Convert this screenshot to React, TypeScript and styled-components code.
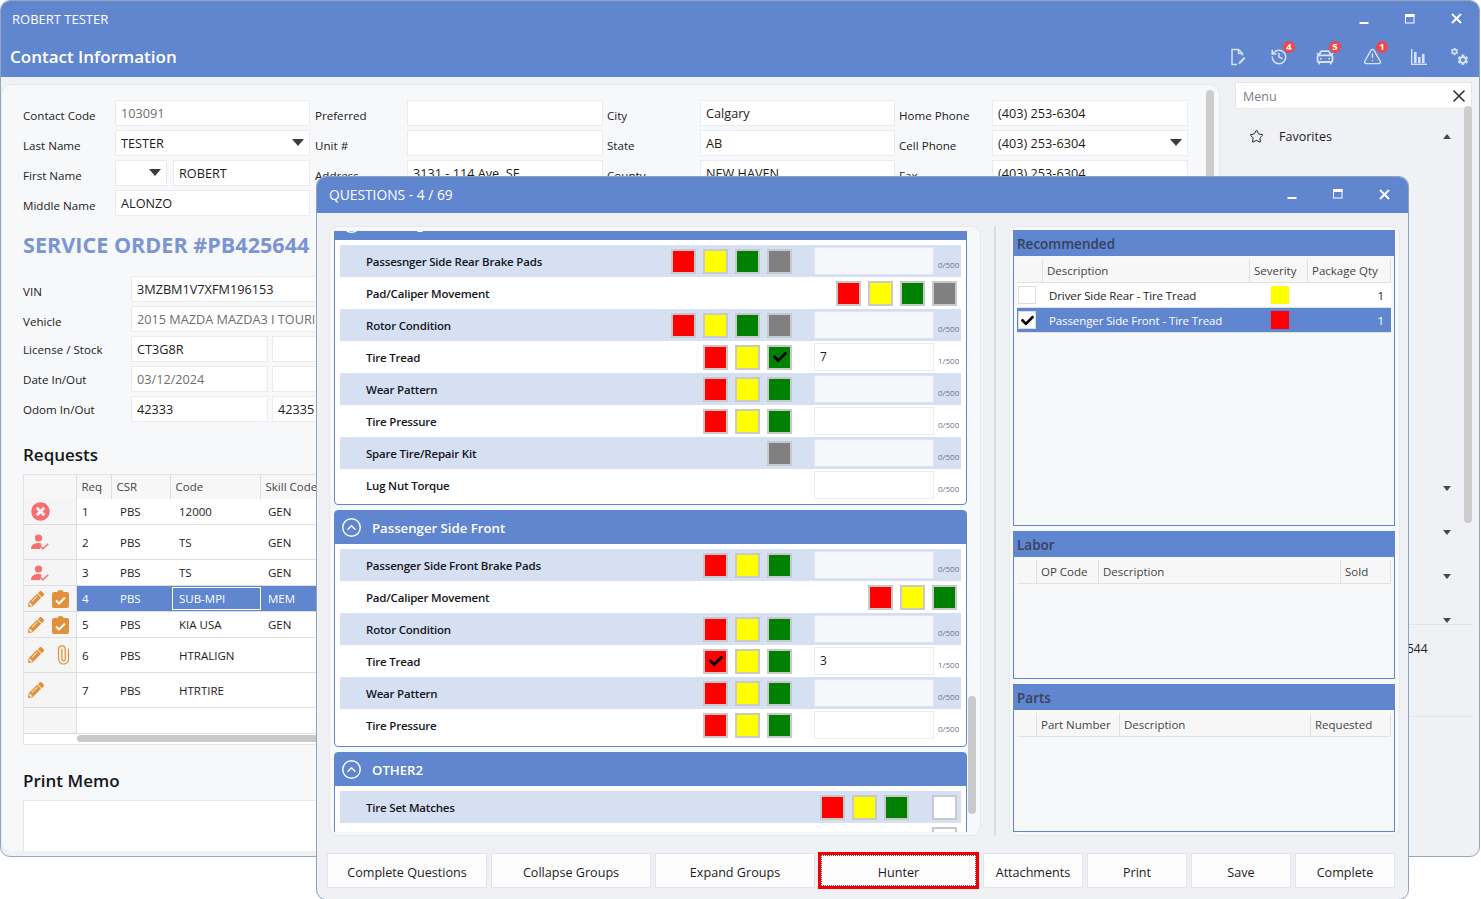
import { ReactNode } from 'react';
import styled, { createGlobalStyle } from 'styled-components';
import { CarFront, ChevronRight, CircleChevronUp, History, Paperclip, Star, TriangleAlert, X } from 'lucide-react';
import { FaCheck, FaPencilAlt, FaTimesCircle } from 'react-icons/fa';

const BLUE = '#5f86cf';
const GEAR = 'M19.14 12.94c.04-.3.06-.61.06-.94 0-.32-.02-.64-.07-.94l2.03-1.58c.18-.14.23-.41.12-.61l-1.92-3.32c-.12-.22-.37-.29-.59-.22l-2.39.96c-.5-.38-1.03-.7-1.62-.94l-.36-2.54c-.04-.24-.24-.41-.48-.41h-3.84c-.24 0-.43.17-.47.41l-.36 2.54c-.59.24-1.13.57-1.62.94l-2.39-.96c-.22-.08-.47 0-.59.22L2.74 8.87c-.12.21-.08.47.12.61l2.03 1.58c-.05.3-.09.63-.09.94s.02.64.07.94l-2.03 1.58c-.18.14-.23.41-.12.61l1.92 3.32c.12.22.37.29.59.22l2.39-.96c.5.38 1.03.7 1.62.94l.36 2.54c.05.24.24.41.48.41h3.84c.24 0 .44-.17.47-.41l.36-2.54c.59-.24 1.13-.56 1.62-.94l2.39.96c.22.08.47 0 .59-.22l1.92-3.32c.12-.22.07-.47-.12-.61l-2.01-1.58zM12 15.6c-1.98 0-3.6-1.62-3.6-3.6s1.62-3.6 3.6-3.6 3.6 1.62 3.6 3.6-1.62 3.6-3.6 3.6z';

const GlobalStyle = createGlobalStyle`
  html, body {
    margin: 0;
    background: #fff;
    overflow: hidden;
  }
  * {
    box-sizing: border-box;
  }
`;

type Swatch = 'red' | 'yellow' | 'green' | 'gray' | 'white';

interface Question {
  label: string;
  buttons: Swatch[];
  checked?: Swatch;
  value?: string;
  noInput?: boolean;
}

const rearQuestions: Question[] = [
  { label: 'Passesnger Side Rear Brake Pads', buttons: ['red', 'yellow', 'green', 'gray'] },
  { label: 'Pad/Caliper Movement', buttons: ['red', 'yellow', 'green', 'gray'], noInput: true },
  { label: 'Rotor Condition', buttons: ['red', 'yellow', 'green', 'gray'] },
  { label: 'Tire Tread', buttons: ['red', 'yellow', 'green'], checked: 'green', value: '7' },
  { label: 'Wear Pattern', buttons: ['red', 'yellow', 'green'] },
  { label: 'Tire Pressure', buttons: ['red', 'yellow', 'green'] },
  { label: 'Spare Tire/Repair Kit', buttons: ['gray'] },
  { label: 'Lug Nut Torque', buttons: [] },
];

const frontQuestions: Question[] = [
  { label: 'Passenger Side Front Brake Pads', buttons: ['red', 'yellow', 'green'] },
  { label: 'Pad/Caliper Movement', buttons: ['red', 'yellow', 'green'], noInput: true },
  { label: 'Rotor Condition', buttons: ['red', 'yellow', 'green'] },
  { label: 'Tire Tread', buttons: ['red', 'yellow', 'green'], checked: 'red', value: '3' },
  { label: 'Wear Pattern', buttons: ['red', 'yellow', 'green'] },
  { label: 'Tire Pressure', buttons: ['red', 'yellow', 'green'] },
];

const otherQuestions: Question[] = [
  { label: 'Tire Set Matches', buttons: ['red', 'yellow', 'green', 'white'], noInput: true },
  { label: '', buttons: ['white'], noInput: true },
];

const requests = [
  { req: '1', code: '12000', skill: 'GEN', height: 26, icons: 'cancel' },
  { req: '2', code: 'TS', skill: 'GEN', height: 35, icons: 'user' },
  { req: '3', code: 'TS', skill: 'GEN', height: 26, icons: 'user' },
  { req: '4', code: 'SUB-MPI', skill: 'MEM', height: 26, icons: 'clipboard', selected: true },
  { req: '5', code: 'KIA USA', skill: 'GEN', height: 26, icons: 'clipboard' },
  { req: '6', code: 'HTRALIGN', skill: '', height: 35, icons: 'clip' },
  { req: '7', code: 'HTRTIRE', skill: '', height: 35, icons: 'pencil' },
];

const Page = styled.div`
  position: relative;
  width: 1481px;
  height: 899px;
  overflow: hidden;
  background: #fff;
  font-family: 'Open Sans', 'Noto Sans', sans-serif;
  font-size: 12px;
  color: #1c1c1c;
`;

const MainWindow = styled.div`
  width: 1480px;
  height: 857px;
  display: flex;
  flex-direction: column;
  background: #eff1f5;
  border: 1px solid #94a6ba;
  border-radius: 10px;
  overflow: hidden;
`;

const TitleBar = styled.div`
  height: 37px;
  flex: none;
  display: flex;
  align-items: center;
  background: ${BLUE};
  color: #fff;
  padding: 0 0 2px 11px;
  font-size: 13px;
`;

const TitleText = styled.div`
  flex: 1;
`;

const WindowButton = styled.div<{ $width: number }>`
  width: ${(p) => p.$width}px;
  height: 24px;
  display: flex;
  align-items: center;
  justify-content: center;
`;

const Header = styled.div`
  height: 39px;
  flex: none;
  display: flex;
  align-items: center;
  background: ${BLUE};
  color: #fff;
  padding: 0 12px 2px 9px;
`;

const HeaderTitle = styled.div`
  flex: 1;
  font-size: 17px;
  font-weight: 600;
`;

const HeaderIcon = styled.div<{ $gap: number }>`
  position: relative;
  width: 16px;
  height: 18px;
  margin-left: ${(p) => p.$gap}px;
  color: #d7e2f5;
  display: flex;
  align-items: center;
  justify-content: center;
  flex: none;
  svg {
    flex: none;
  }
`;

const Badge = styled.span`
  position: absolute;
  top: -7px;
  right: -8px;
  width: 12px;
  height: 12px;
  border-radius: 50%;
  background: #f0474b;
  color: #fff;
  font-size: 9.5px;
  font-weight: 700;
  line-height: 12px;
  text-align: center;
`;

const Body = styled.div`
  flex: 1;
  min-height: 0;
  display: flex;
`;

const LeftPanel = styled.div`
  position: relative;
  width: 1219px;
  height: 767px;
  margin-top: 7px;
  padding: 15px 0 0 21px;
  background: #f7f8fa;
  border: 1px solid #e6e8ed;
  border-bottom: none;
  border-radius: 10px;
  overflow: hidden;
`;

const PanelScroll = styled.div`
  position: absolute;
  top: 5px;
  right: 5px;
  width: 8px;
  height: 500px;
  border-radius: 4px;
  background: #cdcdcd;
`;

const ContactGrid = styled.div`
  display: grid;
  grid-template-columns: 92px 195px 97px 196px 97px 195px 97px 196px;
  grid-auto-rows: 26px;
  row-gap: 4px;
`;

const Label = styled.div<{ $inset?: number; $drop?: number }>`
  padding: ${(p) => p.$drop ?? 5}px 0 0 ${(p) => p.$inset ?? 0}px;
  font-size: 11.6px;
  line-height: 21px;
  color: #222;
  white-space: nowrap;
`;

const Field = styled.div<{ $muted?: boolean; $width?: number }>`
  position: relative;
  height: 26px;
  padding: 0 5px;
  background: #fff;
  border: 1px solid #e9ebef;
  color: ${(p) => (p.$muted ? '#6e6e6e' : '#1c1c1c')};
  font-size: 12.7px;
  line-height: 25px;
  white-space: nowrap;
  overflow: hidden;
  ${(p) => (p.$width ? `width: ${p.$width}px; flex: none;` : '')}
`;

const NameField = styled(Field)`
  flex: 1;
`;

const Caret = styled.span`
  position: absolute;
  top: 8px;
  right: 5px;
  width: 0;
  height: 0;
  border-left: 6.5px solid transparent;
  border-right: 6.5px solid transparent;
  border-top: 7px solid #3c3c3c;
`;

const SplitField = styled.div`
  display: flex;
  gap: 6px;
`;

const ServiceTitle = styled.div`
  margin-top: 14px;
  height: 30px;
  font-size: 21.6px;
  line-height: 30px;
  font-weight: 700;
  color: #7b95d1;
  white-space: nowrap;
`;

const VehicleGrid = styled.div`
  margin-top: 16px;
  display: grid;
  grid-template-columns: 104px 137px 300px;
  grid-auto-rows: 26px;
  row-gap: 4px;
  column-gap: 4px;
`;

const WideField = styled(Field)`
  grid-column: span 2;
`;

const SectionTitle = styled.div<{ $top: number }>`
  margin-top: ${(p) => p.$top}px;
  height: 24px;
  font-size: 17px;
  line-height: 24px;
  font-weight: 600;
  color: #14161c;
`;

const RequestTable = styled.div`
  margin-top: 7px;
  width: 700px;
  border: 1px solid #e3e3e3;
  background: #fff;
  font-size: 11.5px;
`;

const RequestRow = styled.div<{ $height: number; $selected?: boolean }>`
  display: grid;
  grid-template-columns: 53px 35px 59px 90px 1fr;
  height: ${(p) => p.$height}px;
  background: ${(p) => (p.$selected ? BLUE : '#fff')};
  color: ${(p) => (p.$selected ? '#fff' : '#1c1c1c')};
  border-bottom: 1px solid #dedede;
`;

const HeadCell = styled.div`
  padding-left: 4.5px;
  background: #f7f7f7;
  border-right: 1px solid #dedede;
  color: #444;
  line-height: 24px;
`;

const IconCell = styled.div`
  display: flex;
  align-items: center;
  gap: 8px;
  padding-left: 4px;
  background: #f5f5f5;
  border-right: 1px solid #dedede;
  color: #e0913a;
`;

const IconNudge = styled.span`
  display: flex;
  margin-left: 3px;
`;

const UprightClip = styled(Paperclip)`
  margin-left: 1px;
  transform: rotate(-45deg);
`;

const Cell = styled.div<{ $focus?: boolean; $pad: number }>`
  padding-left: ${(p) => p.$pad}px;
  align-self: stretch;
  display: flex;
  align-items: center;
  ${(p) => (p.$focus ? 'border: 1px solid #fff; margin: 1px 0 1px 1px; padding-left: 6px;' : '')}
`;

const TableScroll = styled.div`
  height: 10px;
  padding: 1px 0 1px 53px;
  background: #fff;
`;

const TableThumb = styled.div`
  width: 400px;
  height: 7px;
  border-radius: 4px 0 0 4px;
  background: #c9c9c9;
`;

const MemoBox = styled.div`
  margin-top: 7px;
  width: 700px;
  height: 60px;
  background: #fff;
  border: 1px solid #e6e6e6;
`;

const Sidebar = styled.div`
  position: relative;
  flex: 1;
  padding: 5px 7px 0 15px;
  display: flex;
  flex-direction: column;
`;

const MenuSearch = styled.div`
  height: 27px;
  display: flex;
  align-items: center;
  justify-content: space-between;
  padding: 1px 2px 0 7px;
  background: #fff;
  border: 1px solid #e4e6eb;
  color: #7d7d7d;
  font-size: 12.5px;
`;

const MenuList = styled.div`
  position: relative;
  height: 510px;
  margin-top: 5px;
  overflow: hidden;
`;

const MenuRow = styled.div`
  height: 44px;
  display: flex;
  align-items: center;
  padding-left: 14px;
  font-size: 12.5px;
  color: #222;
`;

const MenuIcon = styled.div<{ $pad?: number }>`
  width: 30px;
  padding-left: ${(p) => p.$pad ?? 0}px;
  display: flex;
  align-items: center;
`;

const MenuText = styled.div`
  flex: 1;
`;

const SmallCaret = styled.span<{ $up?: boolean }>`
  margin-right: 21px;
  width: 0;
  height: 0;
  border-left: 4.5px solid transparent;
  border-right: 4.5px solid transparent;
  ${(p) => (p.$up ? 'border-bottom' : 'border-top')}: 5px solid #4a4a4a;
`;

const MenuScroll = styled.div`
  position: absolute;
  top: 29px;
  right: 7px;
  width: 8px;
  height: 417px;
  border-radius: 4px;
  background: #cdcdcd;
`;

const SideInfo = styled.div`
  height: 93px;
  margin-right: -1px;
  border-top: 1px solid #e2e4e9;
  border-bottom: 1px solid #e2e4e9;
  padding: 15px 0 0 172px;
  font-size: 12px;
  color: #222;
`;

const Modal = styled.div`
  position: absolute;
  left: 316px;
  top: 176px;
  width: 1093px;
  height: 724px;
  display: flex;
  flex-direction: column;
  background: #eff1f5;
  border: 1px solid #8fa3bb;
  border-radius: 10px;
  overflow: hidden;
`;

const ModalHeader = styled.div`
  height: 36px;
  flex: none;
  display: flex;
  align-items: center;
  padding: 0 0 2px 12px;
  background: ${BLUE};
  color: #fff;
  font-size: 13.8px;
`;

const ModalContent = styled.div`
  height: 610px;
  margin-top: 13px;
  padding-left: 12px;
  display: flex;
  flex: none;
`;

const QuestionCard = styled.div`
  position: relative;
  width: 652px;
  padding: 4px 0 3px 4px;
  background: #f7f8fa;
  border: 1px solid #e6e8ed;
  border-radius: 10px;
`;

const QuestionScroll = styled.div`
  width: 633px;
  height: 100%;
  overflow: hidden;
  display: flex;
  flex-direction: column;
  gap: 5px;
`;

const CardThumb = styled.div`
  position: absolute;
  top: 469px;
  right: 4px;
  width: 8px;
  height: 118px;
  border-radius: 4px;
  background: #c9c9c9;
`;

const Splitter = styled.div`
  width: 2px;
  margin: 0 13px;
  background: #dcdde0;
`;

const Group = styled.div<{ $shift?: number; $tail?: number }>`
  flex: none;
  margin-top: ${(p) => p.$shift ?? 0}px;
  border: 1px solid ${BLUE};
  border-radius: 4px;
  background: #fff;
  padding-bottom: ${(p) => p.$tail ?? 3}px;
`;

const GroupHeader = styled.div`
  height: 33px;
  display: flex;
  align-items: center;
  gap: 10px;
  padding-left: 6px;
  background: ${BLUE};
  color: #fff;
  font-size: 13.2px;
  font-weight: 600;
`;

const GroupRows = styled.div`
  padding: 5px 5px 0;
`;

const RowBox = styled.div<{ $alt: boolean }>`
  height: 32px;
  display: flex;
  align-items: center;
  justify-content: flex-end;
  padding-right: 4px;
  background: ${(p) => (p.$alt ? '#d5e0f2' : '#fff')};
`;

const RowLabel = styled.div`
  flex: 1;
  padding-left: 26px;
  font-size: 11.5px;
  font-weight: 600;
  letter-spacing: -0.2px;
  color: #14161c;
`;

const ColourButton = styled.div<{ $colour: Swatch; $gap: number }>`
  width: 25px;
  height: 25px;
  flex: none;
  margin-left: ${(p) => p.$gap}px;
  display: flex;
  align-items: center;
  justify-content: center;
  border: 2px solid #c9c9c9;
  background: ${(p) => ({ red: '#ff0000', yellow: '#ffff00', green: '#008000', gray: '#808080', white: '#ffffff' })[p.$colour]};
  color: #000;
`;

const NoteInput = styled.div<{ $alt: boolean }>`
  width: 120px;
  height: 28px;
  flex: none;
  margin-left: 22px;
  padding-left: 5px;
  border: 1px solid ${(p) => (p.$alt ? '#dfe4ee' : '#eceef2')};
  background: ${(p) => (p.$alt ? '#f5f7fb' : '#fff')};
  line-height: 26px;
  font-size: 12px;
`;

const Count = styled.div`
  width: 23px;
  margin-left: 4px;
  margin-right: -4px;
  align-self: flex-end;
  padding-bottom: 7px;
  font-size: 8px;
  line-height: 11px;
  color: #6e7480;
`;

const RightCard = styled.div`
  width: 391px;
  padding: 3px 4px 3px 3px;
  display: flex;
  flex-direction: column;
  gap: 5px;
  background: #f7f8fa;
  border: 1px solid #e6e8ed;
  border-radius: 10px;
`;

const RightPanel = styled.div<{ $height: number }>`
  height: ${(p) => p.$height}px;
  flex: none;
  border: 1px solid ${BLUE};
  background: #f7f8fa;
`;

const RightTitle = styled.div`
  height: 25px;
  padding-left: 3px;
  background: ${BLUE};
  color: #38415a;
  font-size: 13.5px;
  font-weight: 600;
  line-height: 26px;
`;

const RightGrid = styled.div`
  margin: 3px 3px 0;
  font-size: 11.5px;
`;

const RightRow = styled.div<{ $cols: string; $selected?: boolean; $head?: boolean }>`
  display: grid;
  grid-template-columns: ${(p) => p.$cols};
  height: ${(p) => (p.$head ? 24 : 25)}px;
  align-items: center;
  background: ${(p) => (p.$selected ? BLUE : p.$head ? '#f7f7f7' : '#fff')};
  color: ${(p) => (p.$selected ? '#fff' : p.$head ? '#444' : '#1c1c1c')};
  border-bottom: 1px solid #e1e1e1;
`;

const RightHead = styled.div`
  height: 100%;
  padding-left: 4px;
  border-right: 1px solid #e0e0e0;
  line-height: 23px;
  white-space: nowrap;
`;

const RightCell = styled.div<{ $end?: boolean }>`
  padding: 0 7px 0 6px;
  text-align: ${(p) => (p.$end ? 'right' : 'left')};
  letter-spacing: -0.1px;
  white-space: nowrap;
`;

const SeverityBox = styled.div<{ $colour: string }>`
  width: 18px;
  height: 18px;
  margin-left: 21px;
  background: ${(p) => p.$colour};
`;

const CheckBox = styled.div`
  width: 18px;
  height: 18px;
  margin-left: 1px;
  display: flex;
  align-items: center;
  justify-content: center;
  background: #fff;
  border: 1px solid #dcdcdc;
  color: #000;
`;

const Footer = styled.div`
  margin-top: 17px;
  padding-left: 10px;
  display: flex;
  gap: 4px;
`;

const ActionButton = styled.div<{ $width: number; $focus?: boolean }>`
  position: relative;
  width: ${(p) => p.$width}px;
  height: 35px;
  padding-top: 3px;
  display: flex;
  align-items: center;
  justify-content: center;
  background: #fdfdfe;
  border: 1px solid #e3e5ea;
  font-size: 12.6px;
  color: #1c1c1c;
  ${(p) => p.$focus ? 'outline: 3px solid #f00000; outline-offset: -2px; margin: 0 1px 0 0;' : ''}
`;

const FocusDots = styled.span`
  position: absolute;
  inset: 1px;
  border: 1px dotted #555;
`;

function Minimize() {
  return (
    <svg width="10" height="10" viewBox="0 0 10 10">
      <rect x="0.5" y="8" width="9" height="2.4" fill="#fff" />
    </svg>
  );
}

function Maximize() {
  return (
    <svg width="10" height="10" viewBox="0 0 10 10" fill="none" stroke="#fff">
      <rect x="0.5" y="0.5" width="8.5" height="8.5" />
      <rect x="0.5" y="0.5" width="8.5" height="2" fill="#fff" />
    </svg>
  );
}

function Close() {
  return (
    <svg width="11" height="11" viewBox="0 0 11 11" stroke="#fff" strokeWidth="2">
      <path d="M1 1l9 9M10 1l-9 9" />
    </svg>
  );
}

function DocEdit() {
  return (
    <svg width="16" height="18" viewBox="0 0 16 18" fill="none" stroke="currentColor" strokeWidth="1.5">
      <path d="M7 16.500H2V1.500h6.500l4 4v2" />
      <path d="M8.500 1.500v4h4" />
      <path d="M8.500 16.500l.5-2.500 5-5 1.500 1.500-5 5z" fill="currentColor" stroke="none" />
    </svg>
  );
}

function BarChart() {
  return (
    <svg width="16" height="16" viewBox="0 0 16 16" fill="currentColor">
      <rect x="0" y="0" width="1.4" height="16" />
      <rect x="0" y="14.6" width="16" height="1.4" />
      <rect x="3" y="3" width="2.6" height="11" />
      <rect x="7" y="8" width="2.6" height="6" />
      <rect x="11" y="5" width="2.6" height="9" />
    </svg>
  );
}

function Gears() {
  return (
    <svg width="17" height="17" viewBox="0 0 17 17" fill="currentColor">
      <g transform="translate(-1 -1) scale(0.38)"><path d={GEAR} /></g>
      <g transform="translate(5.300 5.300) scale(0.55)"><path d={GEAR} /></g>
    </svg>
  );
}

function UserCheck() {
  return (
    <svg width="19" height="16" viewBox="0 0 19 16" fill="#f96d6d">
      <circle cx="7.500" cy="4" r="3.600" />
      <path d="M0 15c0-4 3-6 7.500-6 1.200 0 2.300.2 3.200.5L9 15z" />
      <path d="M9.500 12.500l2.300 2.300 5.500-5" fill="none" stroke="#f96d6d" strokeWidth="1.500" />
    </svg>
  );
}

function ClipboardCheck() {
  return (
    <svg width="17" height="18" viewBox="0 0 17 18">
      <path d="M2 2h3.500a3 2 0 0 1 6 0H15a2 2 0 0 1 2 2v12a2 2 0 0 1-2 2H2a2 2 0 0 1-2-2V4a2 2 0 0 1 2-2z" fill="currentColor" />
      <path d="M4 10.500l3 3 6-6" fill="none" stroke="#fff" strokeWidth="2" />
    </svg>
  );
}

function RequestIcons({ kind }: { kind: string }) {
  if (kind === 'cancel') {
    return <IconNudge><FaTimesCircle size={19} color="#f96d6d" /></IconNudge>;
  }
  if (kind === 'user') {
    return <IconNudge><UserCheck /></IconNudge>;
  }
  return (
    <>
      <FaPencilAlt size={16} />
      {kind === 'clipboard' && <ClipboardCheck />}
      {kind === 'clip' && <UprightClip size={20} strokeWidth={1.5} />}
    </>
  );
}

function QuestionRows({ rows }: { rows: Question[] }) {
  return (
    <GroupRows>
      {rows.map((row, i) => (
        <RowBox key={row.label + i} $alt={i % 2 === 0}>
          <RowLabel>{row.label}</RowLabel>
          {row.buttons.map((colour, j) => (
            <ColourButton key={colour} $colour={colour} $gap={j === 0 ? 0 : colour === 'white' ? 23 : 7}>
              {row.checked === colour && <FaCheck size={14} />}
            </ColourButton>
          ))}
          {!row.noInput && (
            <>
              <NoteInput $alt={i % 2 === 0}>{row.value}</NoteInput>
              <Count>{row.value ? '1/500' : '0/500'}</Count>
            </>
          )}
        </RowBox>
      ))}
    </GroupRows>
  );
}

function QuestionGroup({ title, rows, shift, tail }: { title: string; rows: Question[]; shift?: number; tail?: number }) {
  return (
    <Group $shift={shift} $tail={tail}>
      <GroupHeader>
        <CircleChevronUp size={21} strokeWidth={1.6} />
        {title}
      </GroupHeader>
      <QuestionRows rows={rows} />
    </Group>
  );
}

function Contact({ label, value, muted, caret, inset }: { label: string; value: ReactNode; muted?: boolean; caret?: boolean; inset?: number }) {
  return (
    <>
      <Label $inset={inset}>{label}</Label>
      <Field $muted={muted}>
        {value}
        {caret && <Caret />}
      </Field>
    </>
  );
}

function RightTable({ title, height, cols, heads, children }: { title: string; height: number; cols: string; heads: string[]; children?: ReactNode }) {
  return (
    <RightPanel $height={height}>
      <RightTitle>{title}</RightTitle>
      <RightGrid>
        <RightRow $cols={cols} $head>
          {heads.map((h) => (
            <RightHead key={h}>{h}</RightHead>
          ))}
        </RightRow>
        {children}
      </RightGrid>
    </RightPanel>
  );
}

export default function App() {
  const recCols = '26px 207px 58px 1fr';
  return (
    <Page>
      <GlobalStyle />
      <MainWindow>
        <TitleBar>
          <TitleText>ROBERT TESTER</TitleText>
          <WindowButton $width={46}><Minimize /></WindowButton>
          <WindowButton $width={46}><Maximize /></WindowButton>
          <WindowButton $width={46}><Close /></WindowButton>
        </TitleBar>
        <Header>
          <HeaderTitle>Contact Information</HeaderTitle>
          <HeaderIcon $gap={0}><DocEdit /></HeaderIcon>
          <HeaderIcon $gap={25}><History size={18} strokeWidth={2} /><Badge>4</Badge></HeaderIcon>
          <HeaderIcon $gap={30}><CarFront size={20} strokeWidth={2.2} /><Badge>5</Badge></HeaderIcon>
          <HeaderIcon $gap={31}><TriangleAlert size={19} strokeWidth={1.8} /><Badge>1</Badge></HeaderIcon>
          <HeaderIcon $gap={31}><BarChart /></HeaderIcon>
          <HeaderIcon $gap={24}><Gears /></HeaderIcon>
        </Header>
        <Body>
          <LeftPanel>
            <PanelScroll />
            <ContactGrid>
              <Contact label="Contact Code" value="103091" muted />
              <Contact inset={5} label="Preferred" value="" />
              <Contact inset={4} label="City" value="Calgary" />
              <Contact inset={4} label="Home Phone" value="(403) 253-6304" />

              <Contact label="Last Name" value="TESTER" caret />
              <Contact inset={5} label="Unit #" value="" />
              <Contact inset={4} label="State" value="AB" />
              <Contact inset={4} label="Cell Phone" value="(403) 253-6304" caret />

              <Label>First Name</Label>
              <SplitField>
                <Field $width={52}><Caret /></Field>
                <NameField>ROBERT</NameField>
              </SplitField>
              <Contact inset={5} label="Address" value="3131 - 114 Ave. SE" />
              <Contact inset={4} label="County" value="NEW HAVEN" />
              <Contact inset={4} label="Fax" value="(403) 253-6304" />

              <Contact label="Middle Name" value="ALONZO" />
            </ContactGrid>

            <ServiceTitle>SERVICE ORDER #PB425644</ServiceTitle>

            <VehicleGrid>
              <Label>VIN</Label>
              <WideField>3MZBM1V7XFM196153</WideField>
              <Label>Vehicle</Label>
              <WideField $muted>2015 MAZDA MAZDA3 I TOURING</WideField>
              <Label $drop={3}>License / Stock</Label>
              <Field>CT3G8R</Field>
              <Field />
              <Label $drop={3}>Date In/Out</Label>
              <Field $muted>03/12/2024</Field>
              <Field />
              <Label $drop={3}>Odom In/Out</Label>
              <Field>42333</Field>
              <Field>42335</Field>
            </VehicleGrid>

            <SectionTitle $top={21}>Requests</SectionTitle>
            <RequestTable>
              <RequestRow $height={24}>
                <HeadCell />
                <HeadCell>Req</HeadCell>
                <HeadCell>CSR</HeadCell>
                <HeadCell>Code</HeadCell>
                <HeadCell>Skill Code</HeadCell>
              </RequestRow>
              {requests.map((r) => (
                <RequestRow key={r.req} $height={r.height} $selected={r.selected}>
                  <IconCell><RequestIcons kind={r.icons} /></IconCell>
                  <Cell $pad={5}>{r.req}</Cell>
                  <Cell $pad={8}>PBS</Cell>
                  <Cell $pad={8} $focus={r.selected}>{r.code}</Cell>
                  <Cell $pad={7}>{r.skill}</Cell>
                </RequestRow>
              ))}
              <RequestRow $height={26}>
                <IconCell />
                <Cell $pad={5} />
              </RequestRow>
              <TableScroll><TableThumb /></TableScroll>
            </RequestTable>

            <SectionTitle $top={24}>Print Memo</SectionTitle>
            <MemoBox />
          </LeftPanel>

          <Sidebar>
            <MenuSearch>
              Menu
              <X size={20} color="#333" strokeWidth={2} />
            </MenuSearch>
            <MenuList>
              <MenuRow>
                <MenuIcon><Star size={15} strokeWidth={1.6} /></MenuIcon>
                <MenuText>Favorites</MenuText>
                <SmallCaret $up />
              </MenuRow>
              {Array.from({ length: 11 }, (_, i) => (
                <MenuRow key={i}>
                  <MenuIcon $pad={i === 0 ? 8 : 0}>{i === 0 && <ChevronRight size={14} />}</MenuIcon>
                  <MenuText />
                  {i >= 7 && <SmallCaret />}
                </MenuRow>
              ))}
            </MenuList>
            <SideInfo>544</SideInfo>
            <MenuScroll />
          </Sidebar>
        </Body>
      </MainWindow>

      <Modal>
        <ModalHeader>
          <TitleText>QUESTIONS - 4 / 69</TitleText>
          <WindowButton $width={46}><Minimize /></WindowButton>
          <WindowButton $width={46}><Maximize /></WindowButton>
          <WindowButton $width={46}><Close /></WindowButton>
          <WindowButton $width={1} />
        </ModalHeader>
        <ModalContent>
          <QuestionCard>
            <QuestionScroll>
              <QuestionGroup title="Passenger Side Rear" rows={rearQuestions} shift={-25} />
              <QuestionGroup title="Passenger Side Front" rows={frontQuestions} tail={5} />
              <QuestionGroup title="OTHER2" rows={otherQuestions} />
            </QuestionScroll>
            <CardThumb />
          </QuestionCard>
          <Splitter />
          <RightCard>
            <RightTable title="Recommended" height={296} cols={recCols} heads={['', 'Description', 'Severity', 'Package Qty']}>
              <RightRow $cols={recCols}>
                <CheckBox />
                <RightCell>Driver Side Rear - Tire Tread</RightCell>
                <SeverityBox $colour="#ffff00" />
                <RightCell $end>1</RightCell>
              </RightRow>
              <RightRow $cols={recCols} $selected>
                <CheckBox><FaCheck size={13} /></CheckBox>
                <RightCell>Passenger Side Front - Tire Tread</RightCell>
                <SeverityBox $colour="#ff0000" />
                <RightCell $end>1</RightCell>
              </RightRow>
            </RightTable>
            <RightTable title="Labor" height={148} cols="20px 62px 242px 1fr" heads={['', 'OP Code', 'Description', 'Sold']} />
            <RightTable title="Parts" height={148} cols="20px 83px 191px 1fr" heads={['', 'Part Number', 'Description', 'Requested']} />
          </RightCard>
        </ModalContent>
        <Footer>
          <ActionButton $width={160}>Complete Questions</ActionButton>
          <ActionButton $width={160}>Collapse Groups</ActionButton>
          <ActionButton $width={160}>Expand Groups</ActionButton>
          <ActionButton $width={159} $focus>Hunter<FocusDots /></ActionButton>
          <ActionButton $width={100}>Attachments</ActionButton>
          <ActionButton $width={100}>Print</ActionButton>
          <ActionButton $width={100}>Save</ActionButton>
          <ActionButton $width={100}>Complete</ActionButton>
        </Footer>
      </Modal>
    </Page>
  );
}
